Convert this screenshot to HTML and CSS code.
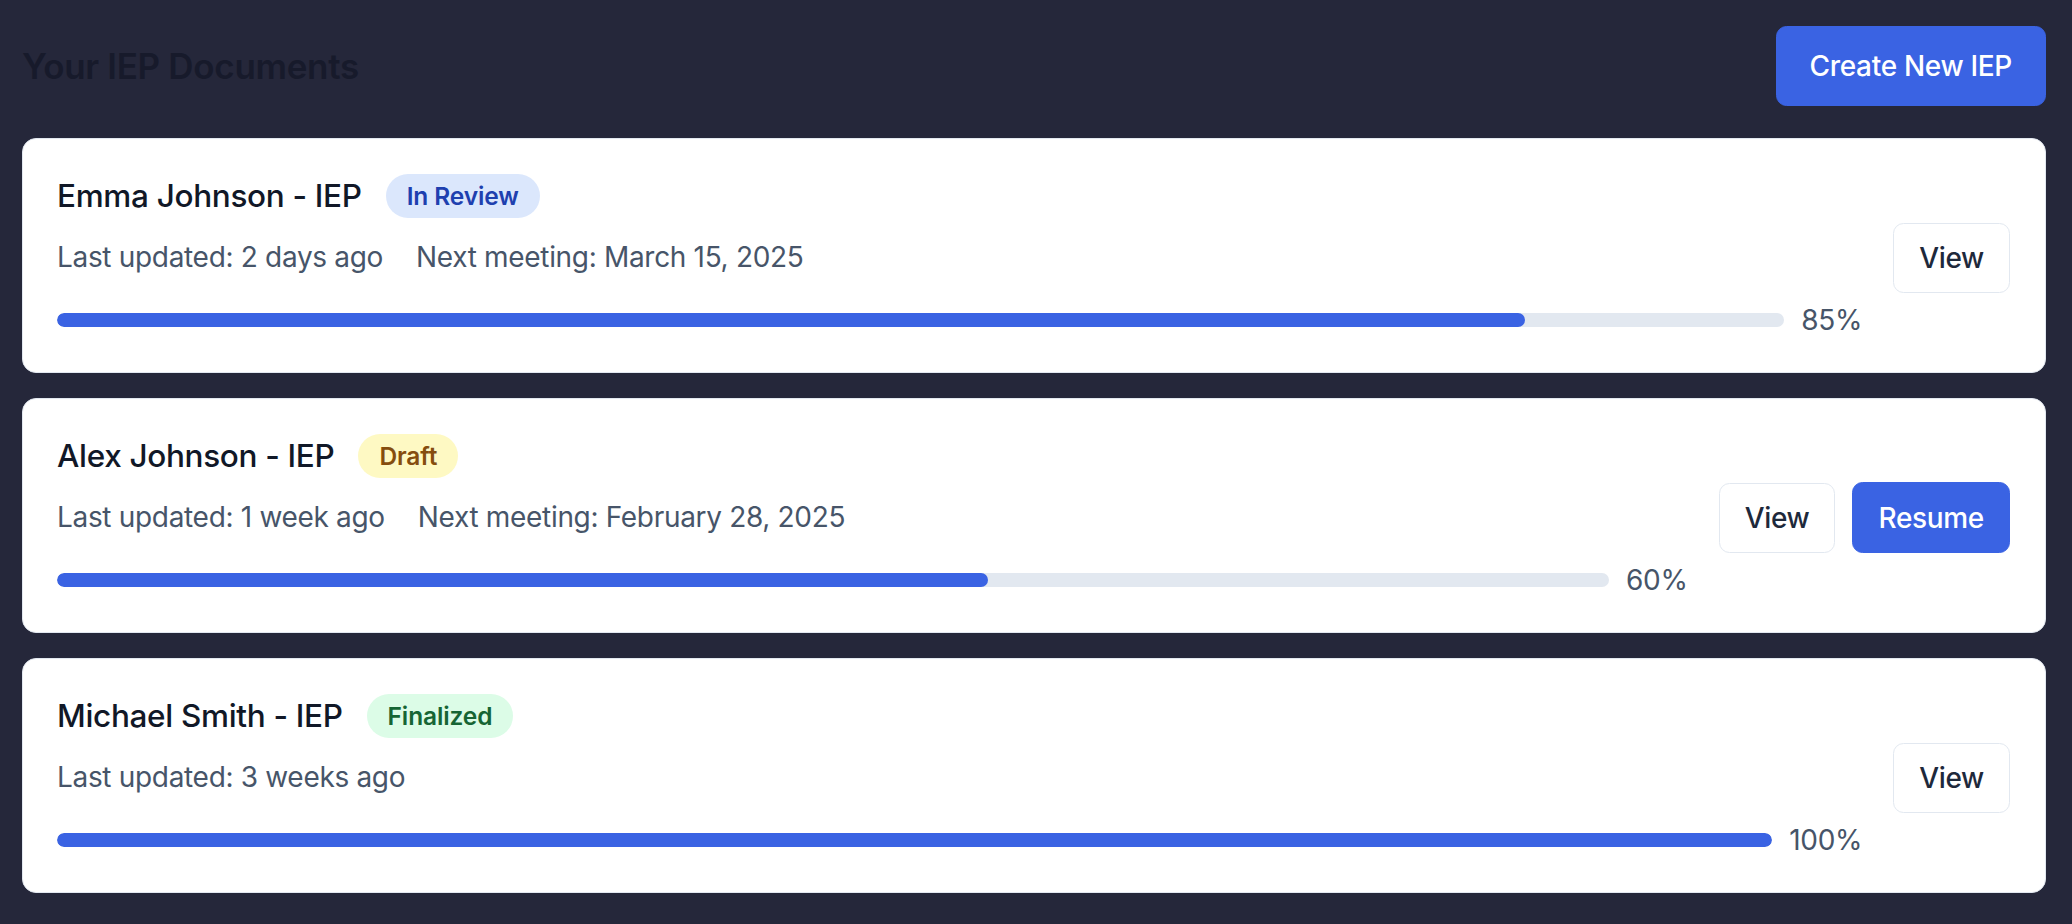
FILE: index.html
```html
<!DOCTYPE html>
<html lang="en">
<head>
<meta charset="utf-8">
<title>Your IEP Documents</title>
<link rel="stylesheet" href="styles.css">
</head>
<body>
<main class="page">
  <header class="page-header">
    <h1 class="page-title">Your IEP Documents</h1>
    <button class="btn btn-primary btn-lg">Create New IEP</button>
  </header>

  <section class="doc-list">
    <article class="doc-card">
      <div class="doc-main">
        <div class="doc-title-row">
          <h2 class="doc-name">Emma Johnson - IEP</h2>
          <span class="badge badge-review">In Review</span>
        </div>
        <div class="doc-meta">
          <span>Last updated: 2 days ago</span>
          <span>Next meeting: March 15, 2025</span>
        </div>
        <div class="progress-row">
          <div class="progress-track"><div class="progress-fill" style="width:85%"></div></div>
          <span class="progress-label">85%</span>
        </div>
      </div>
      <div class="doc-actions">
        <button class="btn btn-outline">View</button>
      </div>
    </article>

    <article class="doc-card">
      <div class="doc-main">
        <div class="doc-title-row">
          <h2 class="doc-name">Alex Johnson - IEP</h2>
          <span class="badge badge-draft">Draft</span>
        </div>
        <div class="doc-meta">
          <span>Last updated: 1 week ago</span>
          <span>Next meeting: February 28, 2025</span>
        </div>
        <div class="progress-row">
          <div class="progress-track"><div class="progress-fill" style="width:60%"></div></div>
          <span class="progress-label">60%</span>
        </div>
      </div>
      <div class="doc-actions">
        <button class="btn btn-outline">View</button>
        <button class="btn btn-primary">Resume</button>
      </div>
    </article>

    <article class="doc-card">
      <div class="doc-main">
        <div class="doc-title-row">
          <h2 class="doc-name">Michael Smith - IEP</h2>
          <span class="badge badge-final">Finalized</span>
        </div>
        <div class="doc-meta">
          <span>Last updated: 3 weeks ago</span>
        </div>
        <div class="progress-row">
          <div class="progress-track"><div class="progress-fill" style="width:100%"></div></div>
          <span class="progress-label">100%</span>
        </div>
      </div>
      <div class="doc-actions">
        <button class="btn btn-outline">View</button>
      </div>
    </article>
  </section>
</main>
</body>
</html>
```

FILE: styles.css
```css
* { box-sizing: border-box; }

html, body {
  margin: 0;
  padding: 0;
  background: #25273a;
}

body {
  font-family: Inter, "Noto Sans", "Liberation Sans", sans-serif;
  letter-spacing: -0.02em;
  color: #0f172a;
  width: 2072px;
  height: 924px;
  overflow: hidden;
}

.page {
  padding: 26px 26px 0 22px;
}

.page-header {
  display: flex;
  align-items: center;
  justify-content: space-between;
  margin-bottom: 32px;
}

.page-title {
  margin: 0;
  font-size: 35px;
  line-height: 49px;
  font-weight: 600;
  color: #171a2b;
}

.btn {
  font-family: inherit;
  letter-spacing: inherit;
  font-size: 28px;
  line-height: 42px;
  font-weight: 500;
  border-radius: 10.5px;
  cursor: pointer;
  white-space: nowrap;
}

.btn-primary {
  background: #3a63e3;
  color: #ffffff;
  border: 1px solid #3a63e3;
  padding: 13.5px 25px;
}

.btn-lg {
  padding: 18px 33px;
}

.btn-outline {
  background: #ffffff;
  color: #1e293b;
  border: 1.5px solid #e2e8f0;
  padding: 13px 25px;
}

.doc-list {
  display: flex;
  flex-direction: column;
  gap: 25px;
}

.doc-card {
  display: flex;
  align-items: center;
  gap: 31px;
  background: #ffffff;
  border: 1px solid #e2e8f0;
  border-radius: 14px;
  padding: 35px 35px 31px 34px;
}

.doc-main {
  flex: 1;
  min-width: 0;
}

.doc-title-row {
  display: flex;
  align-items: center;
  gap: 24px;
  height: 44px;
}

.doc-name {
  margin: 0;
  font-size: 31.5px;
  line-height: 44px;
  font-weight: 500;
  color: #111827;
}

.badge {
  display: inline-flex;
  align-items: center;
  height: 44px;
  padding: 0 21px;
  border-radius: 999px;
  font-size: 24.5px;
  font-weight: 600;
  letter-spacing: -0.005em;
}

.badge-review { background: #dbe7fc; color: #1e40af; }
.badge-draft  { background: #fef9c3; color: #854d0e; }
.badge-final  { background: #dcfce7; color: #166534; }

.doc-meta {
  display: flex;
  gap: 33px;
  margin-top: 18px;
  font-size: 28px;
  line-height: 42px;
  color: #475569;
}

.progress-row {
  display: flex;
  align-items: center;
  gap: 17px;
  margin-top: 21px;
}

.progress-track {
  flex: 1;
  height: 14px;
  background: #e2e8f0;
  border-radius: 999px;
  overflow: hidden;
}

.progress-fill {
  height: 100%;
  background: #3a63e3;
  border-radius: 999px;
}

.progress-label {
  font-size: 28px;
  line-height: 42px;
  color: #475569;
}

.doc-actions {
  display: flex;
  align-items: center;
  gap: 17px;
}
```
